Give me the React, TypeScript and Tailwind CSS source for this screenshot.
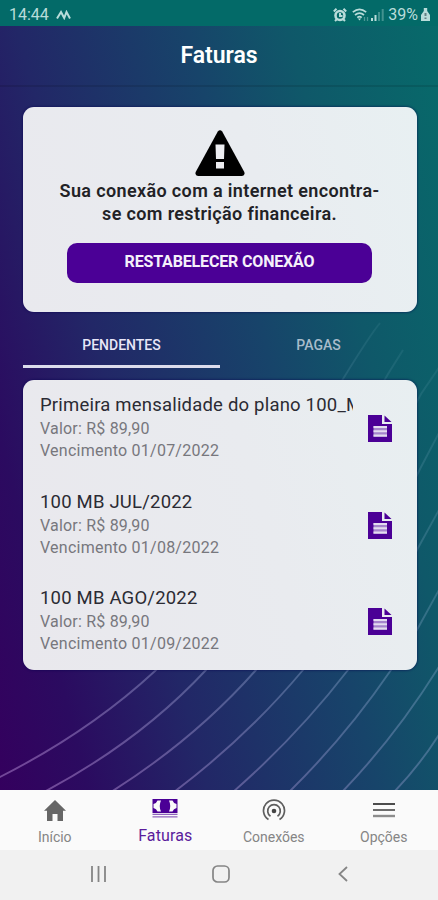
interface Invoice {
  title: string;
  value: string;
  due: string;
}

const invoices: Invoice[] = [
  { title: "Primeira mensalidade do plano 100_MB", value: "R$ 89,90", due: "01/07/2022" },
  { title: "100 MB JUL/2022", value: "R$ 89,90", due: "01/08/2022" },
  { title: "100 MB AGO/2022", value: "R$ 89,90", due: "01/09/2022" },
];

const arcs = [
  "M-4 779 Q88 733 155 671 C230 596 290 470 343 379 Q370 335 380 323",
  "M44 792 Q140 741 206 670 C275 590 330 475 388 374 L403 350",
  "M111 792 Q195 739 256 670 C320 590 370 490 421 394 L440 366",
  "M174 792 Q247 737 303 670 C350 610 385 540 420 469 L440 431",
  "M233 792 Q297 736 348 670 C375 633 395 595 418 548 L440 508",
  "M289 792 Q346 736 391 670 Q405 652 418 628 L440 588",
  "M342 792 Q396 736 440 665",
  "M394 792 Q420 765 440 733",
];

function BackgroundArcs() {
  return (
    <svg className="absolute inset-0 h-full w-full" viewBox="0 26 438 764" fill="none">
      <defs>
        <linearGradient id="arc" gradientUnits="userSpaceOnUse" x1="60" y1="790" x2="390" y2="320">
          <stop offset="0" stopColor="#a67fc8" stopOpacity="0.55" />
          <stop offset="0.5" stopColor="#7a9cc0" stopOpacity="0.42" />
          <stop offset="0.8" stopColor="#7aa8c0" stopOpacity="0.22" />
          <stop offset="1" stopColor="#7ab0c0" stopOpacity="0.1" />
        </linearGradient>
      </defs>
      {arcs.map((d) => (
        <path key={d} d={d} stroke="url(#arc)" strokeWidth="1.9" />
      ))}
    </svg>
  );
}

function StatusBar() {
  return (
    <div className="flex h-[26px] items-center bg-[#036a68] pt-[3px] pr-[8px] pl-[9px] text-[#b9dcda]">
      <span className="text-[16px] leading-none">14:44</span>
      <svg className="ml-[7px] h-[10px] w-[15px]" viewBox="0 0 15 10" fill="none" stroke="currentColor" strokeWidth="2">
        <path d="M1 8.5 5 2l3.2 6L10.500 2 14 8.500" />
      </svg>
      <div className="ml-auto flex items-center">
        <svg className="h-[14px] w-[14px]" viewBox="0 0 14 14" fill="none" stroke="currentColor">
          <circle cx="7" cy="7.500" r="4.500" strokeWidth="2.600" />
          <path d="M7 5v3h2.500M.8 3.500 3.500.8M13.200 3.500 10.500.8M2 13l2-2M12 13l-2-2" strokeWidth="2" />
        </svg>
        <svg className="ml-[5px] h-[14px] w-[17px]" viewBox="0 0 17 14" fill="none" stroke="currentColor" strokeWidth="1.700">
          <path d="M.8 4.200q6.700-5.600 13.400 0M3 7q4.500-3.800 9 0M5.300 9.600q2.200-1.800 4.400 0" />
          <path d="M7.500 12.500 5.800 10.500h3.400Z" fill="currentColor" stroke="none" />
          <path d="M12.500 9v4M15.500 9v4" strokeWidth="1.300" opacity="0.4" />
        </svg>
        <svg className="ml-[2px] h-[13px] w-[13px]" viewBox="0 0 13 13" fill="currentColor">
          <path d="M0 10h2v3H0zM3.500 7h2v6h-2z" />
          <path d="M7 4h2v9H7zM10.700 1h2v12h-2z" opacity="0.35" />
        </svg>
        <span className="ml-[4px] text-[16px] leading-none">39%</span>
        <svg className="ml-[3px] h-[13px] w-[9px]" viewBox="0 0 9 13" fill="currentColor">
          <path d="M2.800 0h3.400v3L9 7v6H0V7l2.800-4Z" />
          <path d="M3.500 5h2v3h-2zM3.500 9.500h2V11h-2z" fill="#647f83" />
        </svg>
      </div>
    </div>
  );
}

function WarningIcon() {
  return (
    <svg className="h-[46px] w-[50px]" viewBox="0 0 50 46">
      <path d="M22.800 1.500q2.200-2.500 4.400 0L49.300 42q1 3.500-2.300 4H3q-3.300-.5-2.300-4Z" fill="#000" />
      <path d="M20.500 14.500h9l-.5 14.500h-8zM21 32h8v6.500h-8z" fill="#ecedf1" />
    </svg>
  );
}

function DocumentIcon() {
  return (
    <svg className="h-[27px] w-[25px] shrink-0" viewBox="0 0 25 27">
      <path d="M0 0H14v9H24v26.700H0Z" fill="#4b0096" />
      <path d="M16.500 .5 23.500 7H16.500Z" fill="#4b0096" />
      <path d="M5.500 11H19v11H5.500z" fill="#a584cc" />
      <path d="M5.500 12H19M5.500 16.300H19M5.500 20.600H19" stroke="#e4dcf0" strokeWidth="2" />
    </svg>
  );
}

function InvoiceRow({ invoice }: { invoice: Invoice }) {
  return (
    <div className="flex h-[96.700px] items-start justify-between pr-[24px] pl-[17px]">
      <div className="w-[313px] pt-[14px]">
        <p className="overflow-hidden text-[18.500px] leading-[23px] tracking-[0.2px] whitespace-nowrap text-[#2b2b33]">
          {invoice.title}
        </p>
        <p className="mt-px text-[16px] leading-[22px] tracking-[0.200px] text-[#77777d]">Valor: {invoice.value}</p>
        <p className="text-[16px] leading-[22px] tracking-[0.240px] text-[#77777d]">Vencimento {invoice.due}</p>
      </div>
      <div className="pt-[35px]">
        <DocumentIcon />
      </div>
    </div>
  );
}

function TabBar() {
  return (
    <nav className="grid h-[60px] grid-cols-4 bg-[#fafafa] text-[14px] leading-[16px] text-[#858585]">
      <div className="flex flex-col items-center pt-[10px]">
        <svg className="h-[21px] w-[22px]" viewBox="0 0 22 21" fill="#666">
          <path d="M11 0 22 10.800h-3V21h-5.500v-7h-5v7H3V10.800H0Z" />
        </svg>
        <span className="mt-[8px]">Início</span>
      </div>
      <div className="flex flex-col items-center pt-[9px] text-[#5b1c9c]">
        <svg className="ml-[2px] h-[19px] w-[26px]" viewBox="0 0 26 19">
          <path d="M.500 0h25v14H.500Z" fill="#4b0096" />
          <path d="M1.500 5Q4.500 4.500 5.500 1.500H9Q6.500 7 9 12.500H5.500Q4.500 9.500 1.500 9ZM24.500 5Q21.500 4.500 20.500 1.500H17Q19.500 7 17 12.500H20.500Q21.500 9.500 24.500 9Z" fill="#fafafa" />
          <path d="M.500 15.300h25M.500 17.800h25" stroke="#9064bd" strokeWidth="1.200" />
        </svg>
        <span className="mt-[10px] ml-[2px] text-[16px] tracking-[0.100px]">Faturas</span>
      </div>
      <div className="flex flex-col items-center pt-[9px]">
        <svg className="h-[22px] w-[24px]" viewBox="0 0 24 22" fill="none" stroke="#5e5e5e" strokeWidth="1.700">
          <circle cx="12" cy="12" r="2.300" fill="#444" stroke="none" />
          <path d="M6.500 20.500A10.500 10.500 0 1 1 17.500 20.500" />
          <path d="M8.500 17.200A6.300 6.300 0 1 1 15.500 17.200" />
        </svg>
        <span className="mt-[8px]">Conexões</span>
      </div>
      <div className="flex flex-col items-center pt-[12px]">
        <svg className="ml-px h-[16px] w-[22px]" viewBox="0 0 22 16">
          <path d="M0 2h22" stroke="#4c4c4c" strokeWidth="2" />
          <path d="M0 8h22" stroke="#6c6c6c" strokeWidth="2" />
          <path d="M0 14h22" stroke="#8c8c8c" strokeWidth="2.400" />
        </svg>
        <span className="mt-[11px] ml-px">Opções</span>
      </div>
    </nav>
  );
}

function SystemBar() {
  return (
    <div className="flex h-[50px] items-start bg-[#f1f1f1] pt-[15px] pl-[90px]">
      <svg className="h-[18px] w-[18px]" viewBox="0 0 18 18" stroke="#858585" strokeWidth="1.800">
        <path d="M2 1v16M8.500 1v16M15 1v16" />
      </svg>
      <svg className="ml-[104px] h-[18px] w-[18px]" viewBox="0 0 18 18" fill="none" stroke="#858585" strokeWidth="1.700">
        <rect x="1" y="1" width="16" height="16" rx="4.500" />
      </svg>
      <svg className="ml-[108px] h-[18px] w-[10px]" viewBox="0 0 10 18" fill="none" stroke="#858585" strokeWidth="1.800">
        <path d="M9 2 1.500 9 9 16" />
      </svg>
    </div>
  );
}

export default function App() {
  return (
    <div className="flex h-[900px] w-[438px] flex-col overflow-hidden font-['Roboto',sans-serif]">
      <StatusBar />
      <main className="relative h-[764px] bg-[linear-gradient(76deg,#34005e_0%,#2b0b60_14%,#222767_33%,#17446a_60%,#0f5869_76%,#076a6a_100%)]">
        <BackgroundArcs />
        <div className="relative flex flex-col">
          <header className="flex h-[61px] items-center justify-center border-b-2 border-black/10 pt-[2px] text-[23px] font-semibold text-white">
            Faturas
          </header>
          <section className="mt-[20px] mr-[21px] ml-[23px] flex h-[205px] flex-col items-center rounded-[11px] bg-[linear-gradient(73deg,#e9e9ee,#e9ecf0_60%,#e8f0f2)] pt-[23px] shadow-[0_0_2px_1px_rgba(8,0,80,0.4)]">
            <div className="mr-px">
              <WarningIcon />
            </div>
            <p className="mt-[4px] mr-px text-center text-[18px] leading-[22.500px] font-semibold tracking-[0.360px] text-[#222226]">
              Sua conexão com a internet encontra-
              <br />
              se com restrição financeira.
            </p>
            <button className="mt-[18px] mr-px h-[40px] w-[305px] rounded-[10px] bg-[#4b0096] pb-[2px] text-[16px] font-bold tracking-[-0.160px] text-[#f5f0fa]">
              RESTABELECER CONEXÃO
            </button>
          </section>
          <div className="mt-[12px] mr-[21px] ml-[23px] grid h-[44px] grid-cols-2 text-center text-[14px] leading-[43px] font-medium">
            <span className="h-[44px] border-b-[3px] border-[#dcdcec] text-[#e8e6f8]">PENDENTES</span>
            <span className="text-[#a9bccb]">PAGAS</span>
          </div>
          <section className="mt-[12px] mr-[21px] ml-[23px] h-[290px] rounded-[11px] bg-[linear-gradient(73deg,#e9e8ed,#e9ebef_60%,#e8eff1)] shadow-[0_0_2px_1px_rgba(8,0,80,0.4)]">
            {invoices.map((invoice) => (
              <InvoiceRow key={invoice.title} invoice={invoice} />
            ))}
          </section>
        </div>
      </main>
      <TabBar />
      <SystemBar />
    </div>
  );
}
